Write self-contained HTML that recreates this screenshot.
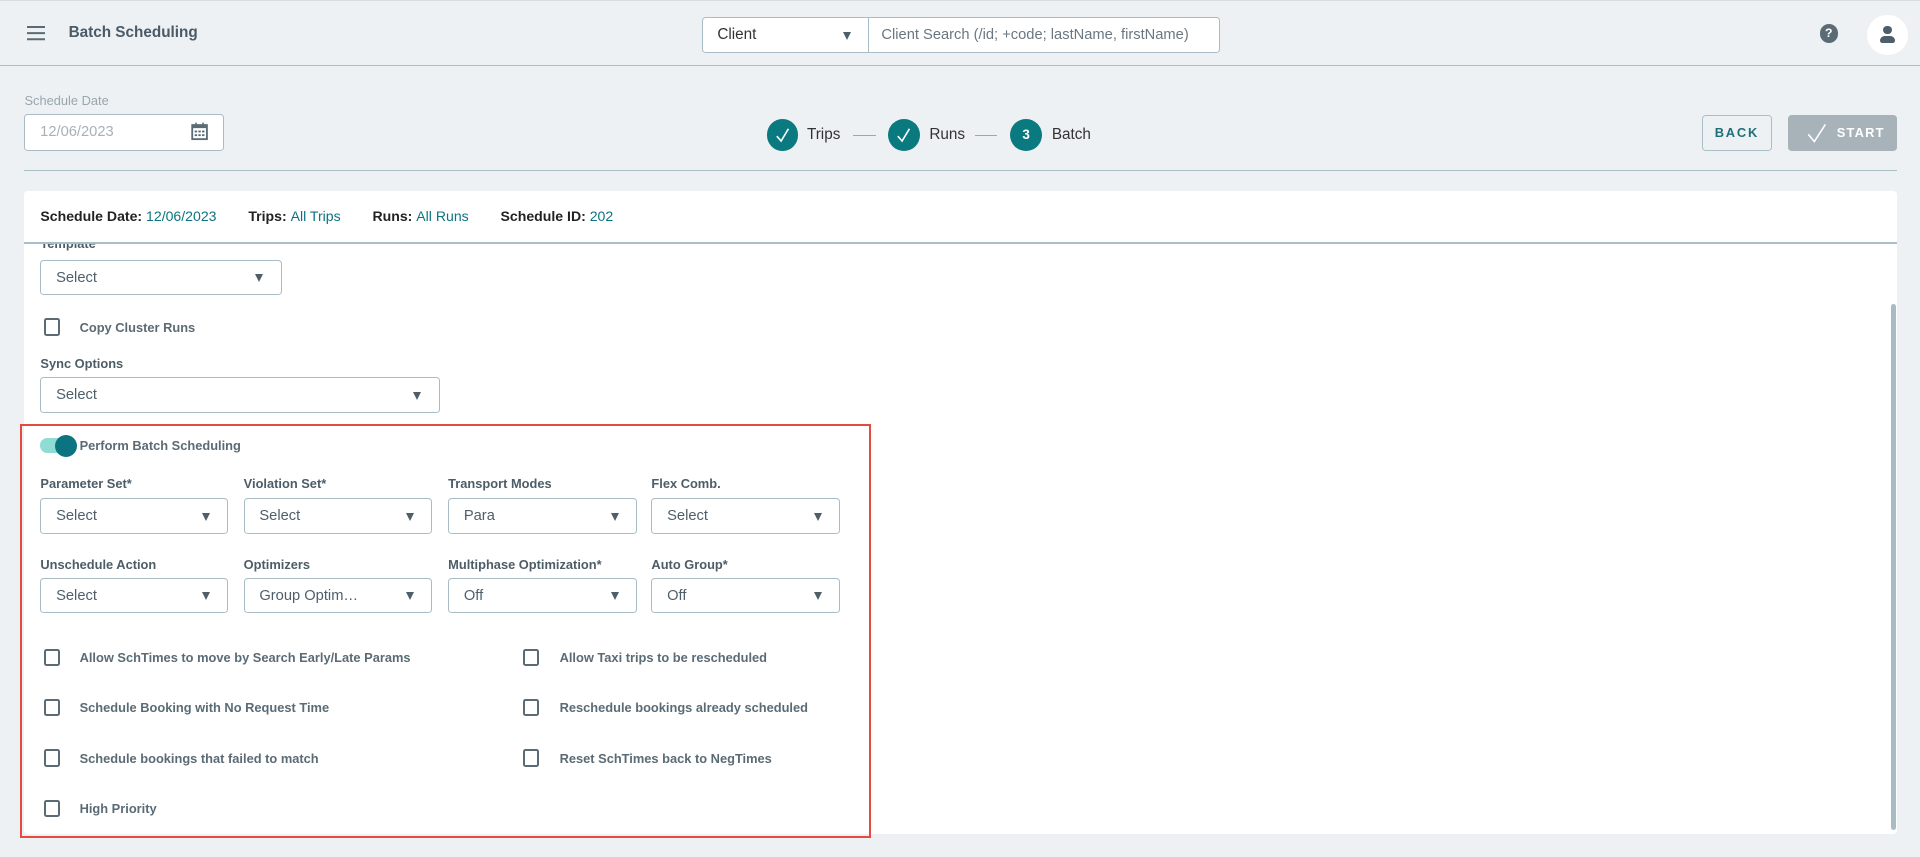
<!DOCTYPE html>
<html><head><meta charset="utf-8">
<style>
html{zoom:1.22449}
*{box-sizing:border-box;margin:0;padding:0}
body{width:1568px;height:700px;background:#edf1f4;font-family:"Liberation Sans",sans-serif;position:relative;overflow:hidden;color:#4a5a66}
.a{position:absolute}
.sel{position:absolute;background:#fff;border:1px solid #a9bcc5;border-radius:3px;height:29px;font-size:12px;color:#4f5f6a;padding:0 0 0 12px;line-height:28px}
.sel:after{content:"";position:absolute;right:14px;top:11px;border-left:4px solid transparent;border-right:4px solid transparent;border-top:7px solid #4f5f6a}
.lbl{position:absolute;font-size:10.5px;font-weight:bold;color:#4d5d68}
.cb{position:absolute;width:13px;height:14px;border:2px solid #5b6b75;border-radius:2px;background:#fff}
.ct{position:absolute;font-size:10.5px;font-weight:bold;color:#5b6b75}
.step{position:absolute;width:26px;height:26px;border-radius:50%;background:#0b7a80;color:#fff;text-align:center;line-height:26px;font-size:12px;font-weight:bold}
.st{position:absolute;font-size:12.5px;color:#333}
.ln{position:absolute;height:1px;background:#9aa9b0;width:18px}
</style></head><body>
<div class="a" style="left:0;top:0;width:1568px;height:1px;background:#d5dde2"></div>
<div class="a" style="left:0;top:53px;width:1568px;height:1px;background:#a9bfc8"></div>
<div class="a" style="left:22px;top:21px;width:15px;height:2px;background:#5b6b75;box-shadow:0 5px 0 #5b6b75,0 10px 0 #5b6b75"></div>
<div class="a" style="left:56px;top:20px;font-size:12.5px;font-weight:bold;color:#4a5a66">Batch Scheduling</div>
<div class="sel" style="left:573px;top:14px;width:137px;height:29px;border-radius:3px 0 0 3px;font-size:12.5px;color:#333"><span>Client</span></div>
<div class="a" style="left:709px;top:14px;width:287px;height:29px;background:#fff;border:1px solid #a9bcc5;border-radius:0 3px 3px 0;font-size:12px;color:#6b7780;padding-left:10px;line-height:28px">Client Search (/id; +code; lastName, firstName)</div>
<div class="a" style="left:1486px;top:20px;width:15px;height:15px;border-radius:50%;background:#5b6b75;color:#fff;font-size:10px;font-weight:bold;text-align:center;line-height:15px">?</div>
<div class="a" style="left:1525px;top:12px;width:33px;height:33px;border-radius:50%;background:#fff"></div>
<div class="a" style="left:1538px;top:21px;width:7px;height:7px;border-radius:50%;background:#4f5f6a"></div>
<div class="a" style="left:1535px;top:29px;width:13px;height:6px;border-radius:6px 6px 3px 3px;background:#4f5f6a"></div>

<div class="a" style="left:20px;top:76px;font-size:10.5px;color:#9aa6ad">Schedule Date</div>
<div class="a" style="left:20px;top:93px;width:163px;height:30px;background:#fff;border:1px solid #a9bcc5;border-radius:3px;font-size:12px;color:#a7b1b7;padding-left:12px;line-height:28px">12/06/2023</div>
<svg class="a" style="left:156px;top:100px" width="14" height="15" viewBox="0 0 14 15"><rect x="1" y="2.5" width="12" height="11.5" fill="none" stroke="#5b6b75" stroke-width="1.5"/><rect x="1" y="2.5" width="12" height="2.5" fill="#5b6b75"/><rect x="3.5" y="0.5" width="1.3" height="3" fill="#5b6b75"/><rect x="9.2" y="0.5" width="1.3" height="3" fill="#5b6b75"/><g fill="#5b6b75"><rect x="3" y="7" width="2" height="1.5"/><rect x="6" y="7" width="2" height="1.5"/><rect x="9" y="7" width="2" height="1.5"/><rect x="3" y="10" width="2" height="1.5"/><rect x="6" y="10" width="2" height="1.5"/><rect x="9" y="10" width="2" height="1.5"/></g></svg>

<div class="step" style="left:626px;top:97px"><svg width="26" height="26"><path d="M8 14 L11.5 18 L17.5 8" fill="none" stroke="#fff" stroke-width="1.3"/></svg></div>
<div class="st" style="left:659px;top:103px">Trips</div>
<div class="ln" style="left:697px;top:110px"></div>
<div class="step" style="left:725px;top:97px"><svg width="26" height="26"><path d="M8 14 L11.5 18 L17.5 8" fill="none" stroke="#fff" stroke-width="1.3"/></svg></div>
<div class="st" style="left:759px;top:103px">Runs</div>
<div class="ln" style="left:796px;top:110px"></div>
<div class="step" style="left:825px;top:97px;font-size:11px">3</div>
<div class="st" style="left:859px;top:103px">Batch</div>

<div class="a" style="left:1390px;top:94px;width:57px;height:29px;border:1px solid #a9bfc8;border-radius:3px;font-size:10.5px;font-weight:bold;letter-spacing:1.5px;color:#1f6f78;text-align:center;line-height:27px">BACK</div>
<div class="a" style="left:1460px;top:94px;width:89px;height:29px;background:#a7b3b9;border-radius:3px;font-size:10.5px;font-weight:bold;letter-spacing:1px;color:#fff;line-height:29px;padding-left:40px">START</div>
<svg class="a" style="left:1476px;top:100px" width="18" height="18"><path d="M1 10 L6 16 L15 2" fill="none" stroke="#fff" stroke-width="1.3"/></svg>
<div class="a" style="left:20px;top:139px;width:1529px;height:1px;background:#a9bfc8"></div>

<div class="a" style="left:20px;top:156px;width:1529px;height:525px;background:#fff;border-radius:3px"></div>
<div class="a" style="left:20px;top:198px;width:1529px;height:1px;background:#a9bfc8"></div>
<div class="a" style="left:33px;top:170px;font-size:11.5px;font-weight:bold;color:#222">Schedule Date: <span style="color:#0b7480;font-weight:normal">12/06/2023</span><span style="margin-left:26px">Trips: </span><span style="color:#0b7480;font-weight:normal">All Trips</span><span style="margin-left:26px">Runs: </span><span style="color:#0b7480;font-weight:normal">All Runs</span><span style="margin-left:26px">Schedule ID: </span><span style="color:#0b7480;font-weight:normal">202</span></div>
<div class="a" style="left:1544px;top:248px;width:4px;height:430px;background:#a9bcc5;border-radius:2px"></div>

<div style="position:absolute;left:20px;top:199px;width:1520px;height:10px;overflow:hidden"><div class="lbl" style="left:13px;top:-6px">Template</div></div>
<div class="sel" style="left:33px;top:212px;width:197px">Select</div>
<div class="cb" style="left:36px;top:260px"></div>
<div class="ct" style="left:65px;top:261px">Copy Cluster Runs</div>
<div class="lbl" style="left:33px;top:291px">Sync Options</div>
<div class="sel" style="left:33px;top:308px;width:326px">Select</div>

<div class="a" style="left:16px;top:346px;width:695px;height:338px;border:2px solid #e5493f"></div>
<div class="a" style="left:33px;top:358px;width:25px;height:12px;border-radius:6px;background:#8fdcd5"></div>
<div class="a" style="left:45px;top:355px;width:18px;height:18px;border-radius:50%;background:#0b7480"></div>
<div class="ct" style="left:65px;top:358px">Perform Batch Scheduling</div>

<div class="lbl" style="left:33px;top:389px">Parameter Set*</div>
<div class="lbl" style="left:199px;top:389px">Violation Set*</div>
<div class="lbl" style="left:366px;top:389px">Transport Modes</div>
<div class="lbl" style="left:532px;top:389px">Flex Comb.</div>
<div class="sel" style="left:33px;top:407px;width:153px">Select</div>
<div class="sel" style="left:199px;top:407px;width:154px">Select</div>
<div class="sel" style="left:366px;top:407px;width:154px">Para</div>
<div class="sel" style="left:532px;top:407px;width:154px">Select</div>

<div class="lbl" style="left:33px;top:455px">Unschedule Action</div>
<div class="lbl" style="left:199px;top:455px">Optimizers</div>
<div class="lbl" style="left:366px;top:455px">Multiphase Optimization*</div>
<div class="lbl" style="left:532px;top:455px">Auto Group*</div>
<div class="sel" style="left:33px;top:472px;width:153px">Select</div>
<div class="sel" style="left:199px;top:472px;width:154px">Group Optim…</div>
<div class="sel" style="left:366px;top:472px;width:154px">Off</div>
<div class="sel" style="left:532px;top:472px;width:154px">Off</div>

<div class="cb" style="left:36px;top:530px"></div><div class="ct" style="left:65px;top:531px">Allow SchTimes to move by Search Early/Late Params</div>
<div class="cb" style="left:427px;top:530px"></div><div class="ct" style="left:457px;top:531px">Allow Taxi trips to be rescheduled</div>
<div class="cb" style="left:36px;top:571px"></div><div class="ct" style="left:65px;top:572px">Schedule Booking with No Request Time</div>
<div class="cb" style="left:427px;top:571px"></div><div class="ct" style="left:457px;top:572px">Reschedule bookings already scheduled</div>
<div class="cb" style="left:36px;top:612px"></div><div class="ct" style="left:65px;top:613px">Schedule bookings that failed to match</div>
<div class="cb" style="left:427px;top:612px"></div><div class="ct" style="left:457px;top:613px">Reset SchTimes back to NegTimes</div>
<div class="cb" style="left:36px;top:653px"></div><div class="ct" style="left:65px;top:654px">High Priority</div>
</body></html>
